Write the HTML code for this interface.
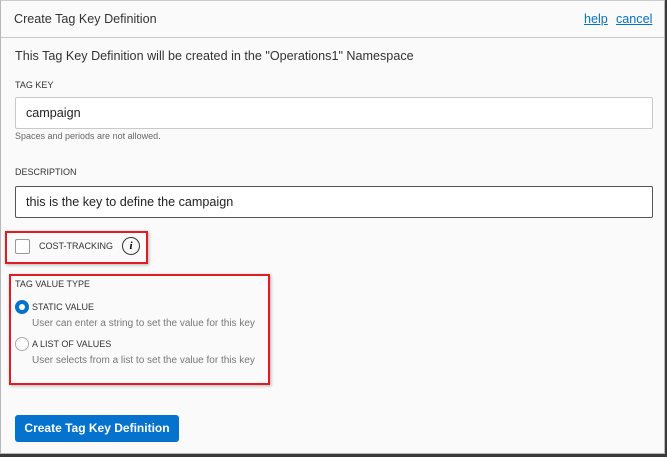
<!DOCTYPE html>
<html><head><style>
*{box-sizing:border-box;margin:0;padding:0}
body{width:667px;height:457px;background:#3a3a3a;font-family:"Liberation Sans",sans-serif;position:relative;overflow:hidden}
#p{position:absolute;left:0;top:0;width:665px;height:454px;background:#fafafa;border:1px solid #b8b8b8;border-top:1px solid #ccc}
.a{position:absolute;white-space:nowrap}
.lbl{font-size:9px;color:#333}
.in{position:absolute;left:14px;width:638px;height:32px;border:1px solid #c9c9c9;background:#fff;border-radius:2px;font-size:12.6px;color:#222;padding:8px 10px}
.red{position:absolute;border:2px solid #e01b22;box-shadow:1px 1px 3px rgba(0,0,0,.3)}
.sub{font-size:10px;color:#777}
</style></head><body>
<div id="p">
<div class="a" style="left:0;top:0;width:663px;height:37px;border-bottom:1px solid #c8c8c8"></div>
<div class="a" style="left:13px;top:11px;font-size:12.6px;color:#333">Create Tag Key Definition</div>
<div class="a" style="left:583px;top:11px;font-size:12.6px;color:#0572ce;text-decoration:underline">help</div>
<div class="a" style="left:615px;top:11px;font-size:12.6px;color:#0572ce;text-decoration:underline">cancel</div>
<div class="a" style="left:14px;top:48px;font-size:12.6px;color:#333">This Tag Key Definition will be created in the "Operations1" Namespace</div>
<div class="a lbl" style="left:14px;top:79px">TAG KEY</div>
<div class="in" style="top:96px">campaign</div>
<div class="a" style="left:14px;top:130px;font-size:9px;color:#666">Spaces and periods are not allowed.</div>
<div class="a lbl" style="left:14px;top:166px">DESCRIPTION</div>
<div class="in" style="top:185px;border-color:#555">this is the key to define the campaign</div>
<div class="red" style="left:4px;top:230px;width:143px;height:33px"></div>
<div class="a" style="left:14px;top:238px;width:15px;height:15px;border:1px solid #999;border-radius:2px;background:#fff"></div>
<div class="a lbl" style="left:38px;top:240px">COST-TRACKING</div>
<div class="a" style="left:121px;top:236px;width:18px;height:18px;border:1.3px solid #333;border-radius:50%;font-size:11px;font-style:italic;font-family:'Liberation Serif',serif;text-align:center;line-height:16px;font-weight:bold">i</div>
<div class="red" style="left:8px;top:273px;width:261px;height:111px"></div>
<div class="a lbl" style="left:14px;top:278px">TAG VALUE TYPE</div>
<div class="a" style="left:14px;top:299px;width:14px;height:14px;border-radius:50%;background:#0572ce"><div style="position:absolute;left:4px;top:4px;width:6px;height:6px;border-radius:50%;background:#fff"></div></div>
<div class="a lbl" style="left:31px;top:301px">STATIC VALUE</div>
<div class="a sub" style="left:31px;top:317px">User can enter a string to set the value for this key</div>
<div class="a" style="left:14px;top:336px;width:14px;height:14px;border-radius:50%;border:1px solid #aaa;background:#fff"></div>
<div class="a lbl" style="left:31px;top:338px">A LIST OF VALUES</div>
<div class="a sub" style="left:31px;top:354px">User selects from a list to set the value for this key</div>
<div class="a" style="left:14px;top:414px;width:164px;height:27px;background:#0572ce;border-radius:3px;color:#fff;font-size:12px;font-weight:bold;text-align:center;line-height:27px">Create Tag Key Definition</div>
</div>
</body></html>
